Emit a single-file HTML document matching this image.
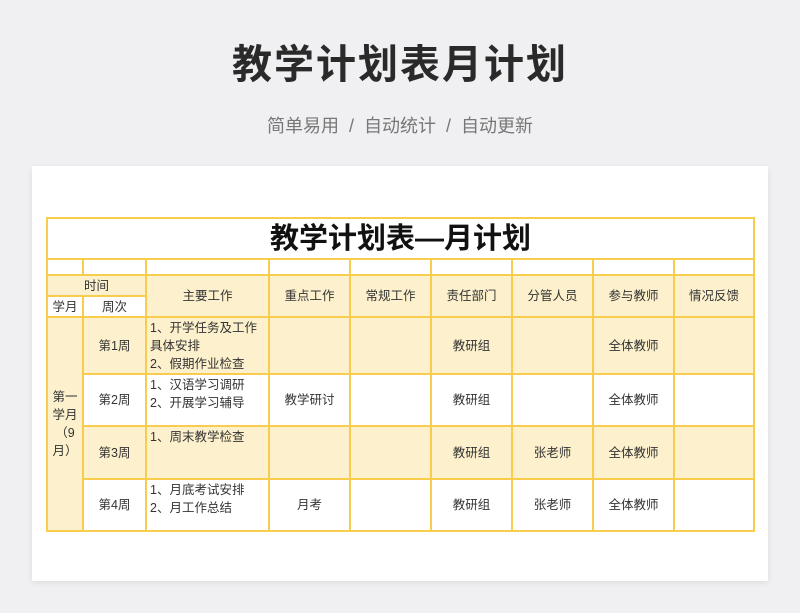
<!DOCTYPE html>
<html><head><meta charset="utf-8"><style>
body{margin:0;width:800px;height:613px;background:#f0f0f2;font-family:"Liberation Sans","Noto Sans CJK SC",sans-serif;position:relative;overflow:hidden}
.h1{position:absolute;top:32px;left:0;width:800px;text-align:center;font-size:40px;font-weight:bold;color:#2a2a2a;letter-spacing:2px}
.sub{position:absolute;top:112px;left:0;width:800px;text-align:center;font-size:18px;color:#777}
.card{position:absolute;left:32px;top:166px;width:736px;height:415px;background:#fff;box-shadow:0 2px 6px rgba(0,0,0,.08)}
table{position:absolute;left:46px;top:217px;border-collapse:collapse;table-layout:fixed;width:707px;font-size:12.5px;color:#333}
td{border:2px solid #f8cd4e;text-align:center;vertical-align:middle;padding:0;line-height:18px}
.f{background:#fdf0cc}
.l{text-align:left;padding-left:3px;vertical-align:top;padding-top:1px}
.t{font-size:29px;font-weight:bold;color:#111;height:39px}
</style></head><body>
<div class="h1">教学计划表月计划</div>
<div class="sub">简单易用 &nbsp;/&nbsp; 自动统计 &nbsp;/&nbsp; 自动更新</div>
<div class="card"></div>
<table>
<colgroup><col style="width:36px"><col style="width:63px"><col style="width:123px"><col style="width:81px"><col style="width:81px"><col style="width:81px"><col style="width:81px"><col style="width:81px"><col style="width:80px"></colgroup>
<tr><td colspan="9" class="t">教学计划表—月计划</td></tr>
<tr style="height:16px"><td></td><td></td><td></td><td></td><td></td><td></td><td></td><td></td><td></td></tr>
<tr style="height:21px"><td colspan="2" class="f">时间</td><td rowspan="2" class="f">主要工作</td><td rowspan="2" class="f">重点工作</td><td rowspan="2" class="f">常规工作</td><td rowspan="2" class="f">责任部门</td><td rowspan="2" class="f">分管人员</td><td rowspan="2" class="f">参与教师</td><td rowspan="2" class="f">情况反馈</td></tr>
<tr style="height:21px"><td>学月</td><td>周次</td></tr>
<tr style="height:54px"><td rowspan="4" class="f">第一<br>学月<br>（9<br>月）</td><td class="f">第1周</td><td class="f l">1、开学任务及工作<br>具体安排<br>2、假期作业检查</td><td class="f"></td><td class="f"></td><td class="f">教研组</td><td class="f"></td><td class="f">全体教师</td><td class="f"></td></tr>
<tr style="height:52px"><td>第2周</td><td class="l">1、汉语学习调研<br>2、开展学习辅导</td><td>教学研讨</td><td></td><td>教研组</td><td></td><td>全体教师</td><td></td></tr>
<tr style="height:53px"><td class="f">第3周</td><td class="f l">1、周末教学检查</td><td class="f"></td><td class="f"></td><td class="f">教研组</td><td class="f">张老师</td><td class="f">全体教师</td><td class="f"></td></tr>
<tr style="height:52px"><td>第4周</td><td class="l">1、月底考试安排<br>2、月工作总结</td><td>月考</td><td></td><td>教研组</td><td>张老师</td><td>全体教师</td><td></td></tr>
</table>
</body></html>
